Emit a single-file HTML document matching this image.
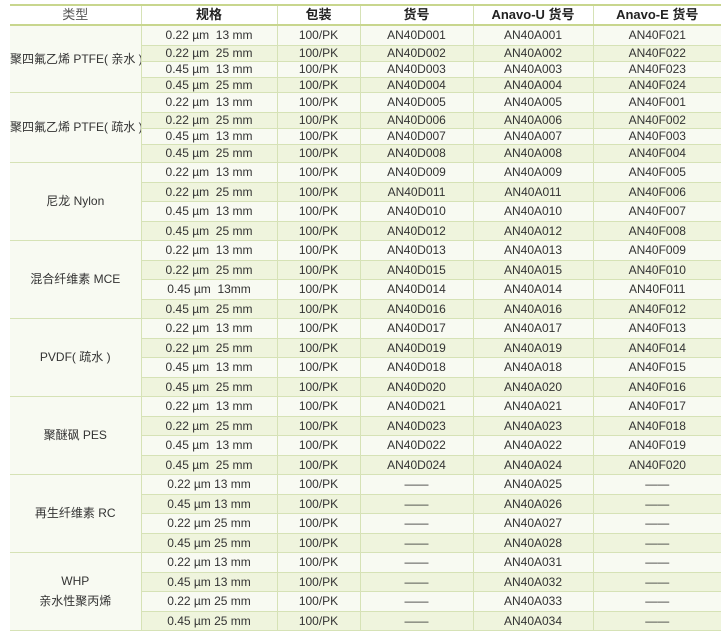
<!DOCTYPE html><html><head><meta charset="utf-8"><style>
body{margin:0;background:#fff;}
table{position:absolute;left:10px;top:4px;width:711px;border-collapse:collapse;table-layout:fixed;font-family:"Liberation Sans","Noto Sans CJK SC",sans-serif;font-size:12px;color:#333;}
td,th{border:1px solid #d6e2b6;border-left:none;border-right:1px solid #d6e2b6;padding:0;text-align:center;line-height:14px;white-space:nowrap;overflow:hidden}
td:last-child,th:last-child{border-right:none}
th{font-weight:bold;font-size:13px;color:#222;background:#fff;border-top:2px solid #c8d68e;border-bottom:2px solid #c8d68e;height:18px}
th.t{font-weight:normal;color:#555}
td.g{background:#f8faf2;text-align:center}
tr.a td{background:#f8faf2}
tr.b td{background:#eff4dd}
tr.b td.g,tr.a td.g{background:#f8faf2}
tbody tr.s td{border-top:1px solid #cfdca6}
</style></head><body>
<table>
<colgroup><col style="width:131px"><col style="width:136px"><col style="width:83px"><col style="width:113px"><col style="width:120px"><col style="width:128px"></colgroup>
<tr><th class="t">类型</th><th>规格</th><th>包装</th><th>货号</th><th>Anavo-U 货号</th><th>Anavo-E 货号</th></tr>
<tr class="a s" style="height:20px"><td class="g" rowspan="4">聚四氟乙烯 PTFE( 亲水 )</td><td>0.22 µm&nbsp; 13 mm</td><td>100/PK</td><td>AN40D001</td><td>AN40A001</td><td>AN40F021</td></tr>
<tr class="b" style="height:16px"><td>0.22 µm&nbsp; 25 mm</td><td>100/PK</td><td>AN40D002</td><td>AN40A002</td><td>AN40F022</td></tr>
<tr class="a" style="height:16px"><td>0.45 µm&nbsp; 13 mm</td><td>100/PK</td><td>AN40D003</td><td>AN40A003</td><td>AN40F023</td></tr>
<tr class="b" style="height:14px"><td>0.45 µm&nbsp; 25 mm</td><td>100/PK</td><td>AN40D004</td><td>AN40A004</td><td>AN40F024</td></tr>
<tr class="a s" style="height:20px"><td class="g" rowspan="4">聚四氟乙烯 PTFE( 疏水 )</td><td>0.22 µm&nbsp; 13 mm</td><td>100/PK</td><td>AN40D005</td><td>AN40A005</td><td>AN40F001</td></tr>
<tr class="b" style="height:16px"><td>0.22 µm&nbsp; 25 mm</td><td>100/PK</td><td>AN40D006</td><td>AN40A006</td><td>AN40F002</td></tr>
<tr class="a" style="height:16px"><td>0.45 µm&nbsp; 13 mm</td><td>100/PK</td><td>AN40D007</td><td>AN40A007</td><td>AN40F003</td></tr>
<tr class="b" style="height:18px"><td>0.45 µm&nbsp; 25 mm</td><td>100/PK</td><td>AN40D008</td><td>AN40A008</td><td>AN40F004</td></tr>
<tr class="a s" style="height:20px"><td class="g" rowspan="4">尼龙 Nylon</td><td>0.22 µm&nbsp; 13 mm</td><td>100/PK</td><td>AN40D009</td><td>AN40A009</td><td>AN40F005</td></tr>
<tr class="b" style="height:19px"><td>0.22 µm&nbsp; 25 mm</td><td>100/PK</td><td>AN40D011</td><td>AN40A011</td><td>AN40F006</td></tr>
<tr class="a" style="height:20px"><td>0.45 µm&nbsp; 13 mm</td><td>100/PK</td><td>AN40D010</td><td>AN40A010</td><td>AN40F007</td></tr>
<tr class="b" style="height:19px"><td>0.45 µm&nbsp; 25 mm</td><td>100/PK</td><td>AN40D012</td><td>AN40A012</td><td>AN40F008</td></tr>
<tr class="a s" style="height:20px"><td class="g" rowspan="4">混合纤维素 MCE</td><td>0.22 µm&nbsp; 13 mm</td><td>100/PK</td><td>AN40D013</td><td>AN40A013</td><td>AN40F009</td></tr>
<tr class="b" style="height:19px"><td>0.22 µm&nbsp; 25 mm</td><td>100/PK</td><td>AN40D015</td><td>AN40A015</td><td>AN40F010</td></tr>
<tr class="a" style="height:20px"><td>0.45 µm&nbsp; 13mm</td><td>100/PK</td><td>AN40D014</td><td>AN40A014</td><td>AN40F011</td></tr>
<tr class="b" style="height:19px"><td>0.45 µm&nbsp; 25 mm</td><td>100/PK</td><td>AN40D016</td><td>AN40A016</td><td>AN40F012</td></tr>
<tr class="a s" style="height:20px"><td class="g" rowspan="4">PVDF( 疏水 )</td><td>0.22 µm&nbsp; 13 mm</td><td>100/PK</td><td>AN40D017</td><td>AN40A017</td><td>AN40F013</td></tr>
<tr class="b" style="height:19px"><td>0.22 µm&nbsp; 25 mm</td><td>100/PK</td><td>AN40D019</td><td>AN40A019</td><td>AN40F014</td></tr>
<tr class="a" style="height:20px"><td>0.45 µm&nbsp; 13 mm</td><td>100/PK</td><td>AN40D018</td><td>AN40A018</td><td>AN40F015</td></tr>
<tr class="b" style="height:19px"><td>0.45 µm&nbsp; 25 mm</td><td>100/PK</td><td>AN40D020</td><td>AN40A020</td><td>AN40F016</td></tr>
<tr class="a s" style="height:20px"><td class="g" rowspan="4">聚醚砜 PES</td><td>0.22 µm&nbsp; 13 mm</td><td>100/PK</td><td>AN40D021</td><td>AN40A021</td><td>AN40F017</td></tr>
<tr class="b" style="height:19px"><td>0.22 µm&nbsp; 25 mm</td><td>100/PK</td><td>AN40D023</td><td>AN40A023</td><td>AN40F018</td></tr>
<tr class="a" style="height:20px"><td>0.45 µm&nbsp; 13 mm</td><td>100/PK</td><td>AN40D022</td><td>AN40A022</td><td>AN40F019</td></tr>
<tr class="b" style="height:19px"><td>0.45 µm&nbsp; 25 mm</td><td>100/PK</td><td>AN40D024</td><td>AN40A024</td><td>AN40F020</td></tr>
<tr class="a s" style="height:20px"><td class="g" rowspan="4">再生纤维素 RC</td><td>0.22 µm 13 mm</td><td>100/PK</td><td>——</td><td>AN40A025</td><td>——</td></tr>
<tr class="b" style="height:19px"><td>0.45 µm 13 mm</td><td>100/PK</td><td>——</td><td>AN40A026</td><td>——</td></tr>
<tr class="a" style="height:20px"><td>0.22 µm 25 mm</td><td>100/PK</td><td>——</td><td>AN40A027</td><td>——</td></tr>
<tr class="b" style="height:19px"><td>0.45 µm 25 mm</td><td>100/PK</td><td>——</td><td>AN40A028</td><td>——</td></tr>
<tr class="a s" style="height:20px"><td class="g" rowspan="4" style="line-height:20px">WHP<br>亲水性聚丙烯</td><td>0.22 µm 13 mm</td><td>100/PK</td><td>——</td><td>AN40A031</td><td>——</td></tr>
<tr class="b" style="height:19px"><td>0.45 µm 13 mm</td><td>100/PK</td><td>——</td><td>AN40A032</td><td>——</td></tr>
<tr class="a" style="height:20px"><td>0.22 µm 25 mm</td><td>100/PK</td><td>——</td><td>AN40A033</td><td>——</td></tr>
<tr class="b" style="height:19px"><td>0.45 µm 25 mm</td><td>100/PK</td><td>——</td><td>AN40A034</td><td>——</td></tr>
</table>
</body></html>
